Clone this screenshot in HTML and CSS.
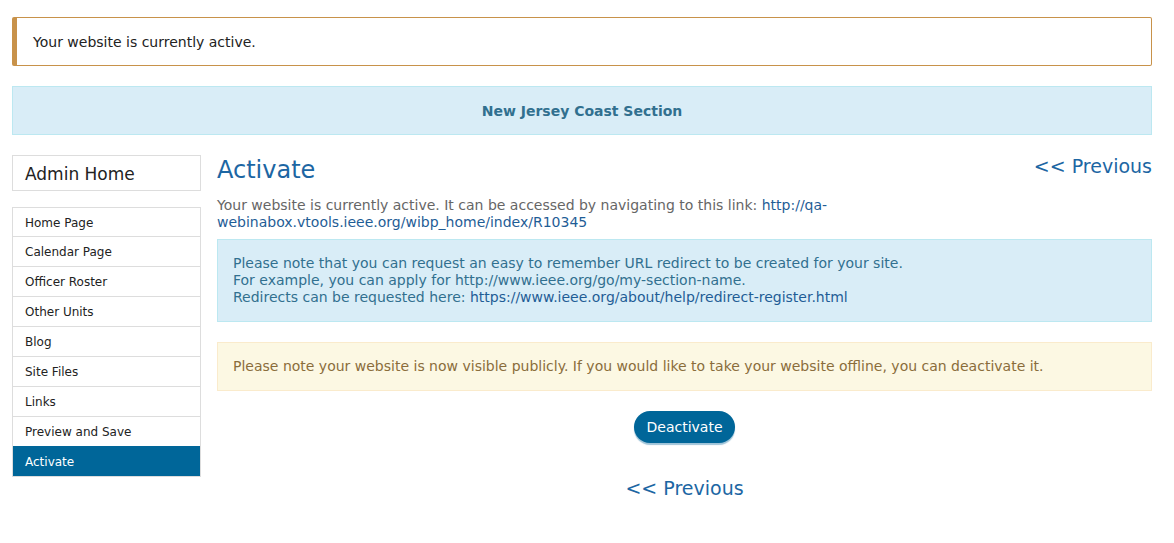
FILE: index.html
```html
<!DOCTYPE html>
<html lang="en">
<head>
  <meta charset="UTF-8" />
  <meta name="viewport" content="width=device-width, initial-scale=1" />
  <title>Activate</title>
  <link rel="stylesheet" href="styles.css">
</head>
<body>
  <div class="page">
    <div class="status-alert">Your website is currently active.</div>

    <div class="section-band">New Jersey Coast Section</div>

    <div class="layout">
      <aside class="sidebar">
        <div class="admin-home">Admin Home</div>
        <ul class="nav">
          <li><a href="#">Home Page</a></li>
          <li><a href="#">Calendar Page</a></li>
          <li><a href="#">Officer Roster</a></li>
          <li><a href="#">Other Units</a></li>
          <li><a href="#">Blog</a></li>
          <li><a href="#">Site Files</a></li>
          <li><a href="#">Links</a></li>
          <li><a href="#">Preview and Save</a></li>
          <li class="active"><a href="#">Activate</a></li>
        </ul>
      </aside>

      <main class="content">
        <div class="title-row">
          <h1>Activate</h1>
          <a class="prev-link" href="#">&lt;&lt; Previous</a>
        </div>

        <p class="intro">Your website is currently active. It can be accessed by navigating to this link: <a href="#">http://qa-webinabox.vtools.ieee.org/wibp_home/index/R10345</a></p>

        <div class="info-box">
          Please note that you can request an easy to remember URL redirect to be created for your site.<br>
          For example, you can apply for http://www.ieee.org/go/my-section-name.<br>
          Redirects can be requested here: <a href="#">https://www.ieee.org/about/help/redirect-register.html</a>
        </div>

        <div class="warn-box">Please note your website is now visible publicly. If you would like to take your website offline, you can deactivate it.</div>

        <div class="actions">
          <button type="button">Deactivate</button>
          <a class="prev-link" href="#">&lt;&lt; Previous</a>
        </div>
      </main>
    </div>
  </div>
</body>
</html>
```

FILE: styles.css
```css
body {
  margin: 0;
  font-family: "DejaVu Sans", Verdana, sans-serif;
  font-size: 14px;
  color: #333;
  background: #fff;
}

a {
  color: #1f5d96;
  text-decoration: none;
}

.page {
  padding: 17px 22px 0 12px;
}

.status-alert {
  border: 1px solid #c8924a;
  border-left-width: 5px;
  border-radius: 2px;
  padding: 16px 16px 14px;
  line-height: 17px;
  color: #222;
  margin-bottom: 20px;
}

.section-band {
  background: #d9edf7;
  border: 1px solid #bce8f1;
  color: #31708f;
  font-weight: bold;
  text-align: center;
  line-height: 17px;
  padding: 16px 15px 14px;
  margin-bottom: 20px;
}

.layout {
  display: flex;
  gap: 16px;
  align-items: flex-start;
}

.sidebar {
  width: 189px;
  flex-shrink: 0;
}

.admin-home {
  border: 1px solid #ddd;
  height: 32px;
  line-height: 33px;
  padding: 2px 12px 0;
  font-size: 17px;
  color: #222;
  margin-bottom: 16px;
}

.nav {
  list-style: none;
  margin: 0;
  padding: 0;
  border: 1px solid #ddd;
}

.nav li {
  border-top: 1px solid #ddd;
}

.nav li:first-child {
  border-top: none;
}

.nav a {
  display: block;
  height: 28px;
  line-height: 29px;
  padding: 1px 12px 0;
  font-size: 12px;
  color: #222;
}

.nav li:first-child a {
  height: 27px;
}

.nav li.active {
  background: #006699;
  border-top-color: #006699;
}

.nav li.active a {
  color: #fff;
}

.content {
  flex: 1;
  min-width: 0;
}

.title-row {
  display: flex;
  justify-content: space-between;
  align-items: flex-start;
}

h1 {
  margin: 0;
  padding-top: 1px;
  font-size: 24px;
  font-weight: normal;
  line-height: 28px;
  color: #1c66a3;
}

.prev-link {
  font-size: 19px;
  line-height: 22px;
  color: #1c66a3;
}

.intro {
  margin: 13px 0 8px;
  line-height: 17px;
  color: #666;
}

.info-box {
  background: #d9edf7;
  border: 1px solid #bce8f1;
  color: #31708f;
  padding: 15px;
  line-height: 17px;
  margin-bottom: 20px;
}

.warn-box {
  background: #fcf8e3;
  border: 1px solid #faebcc;
  color: #8a6d3b;
  padding: 15px;
  line-height: 17px;
}

.actions {
  display: flex;
  flex-direction: column;
  align-items: center;
  margin-top: 20px;
}

.actions button {
  background: #006699;
  color: #fff;
  border: none;
  border-radius: 16px;
  height: 32px;
  padding: 0 12px;
  font-family: inherit;
  font-size: 14px;
  box-shadow: 0 2px 1px #9ec3d8;
  cursor: pointer;
}

.actions .prev-link {
  margin-top: 34px;
}
```
